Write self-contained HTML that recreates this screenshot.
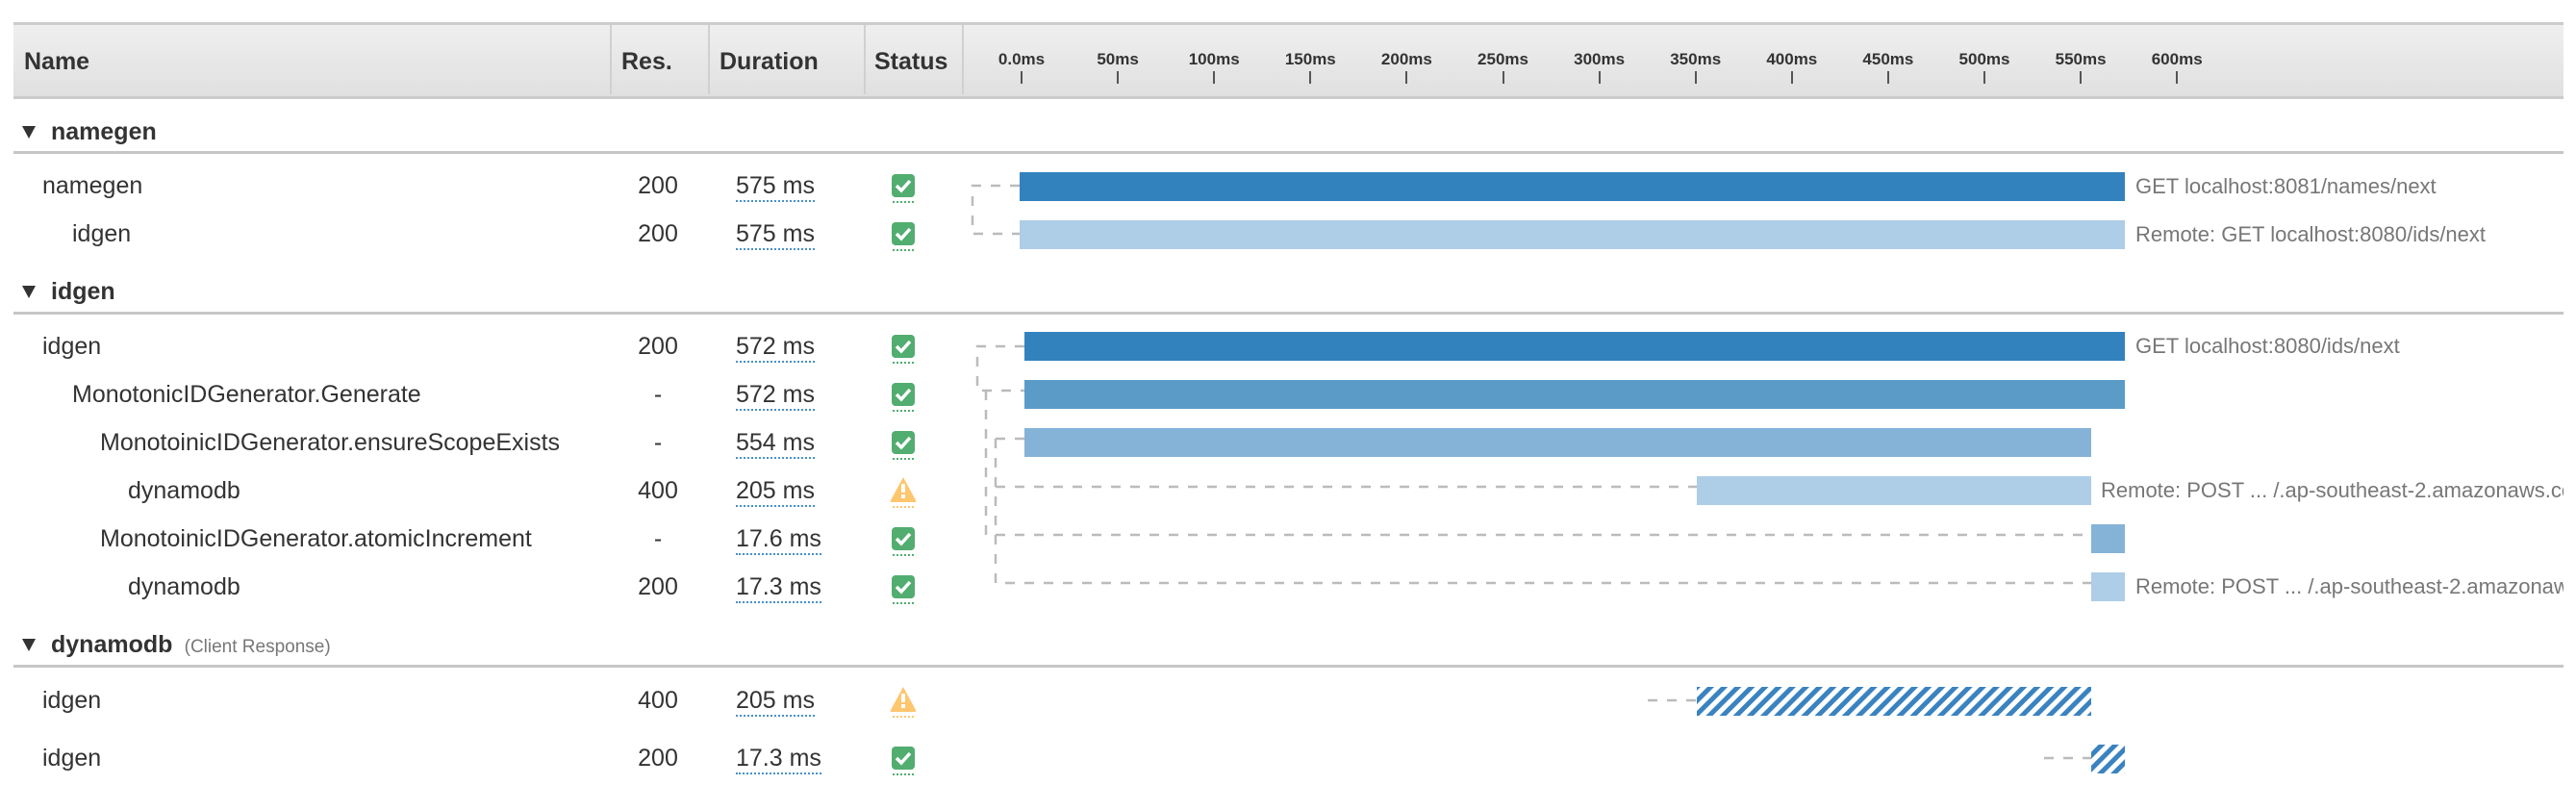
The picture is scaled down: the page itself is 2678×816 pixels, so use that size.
<!DOCTYPE html>
<html><head><meta charset="utf-8"><style>
*{margin:0;padding:0;box-sizing:border-box}
body{width:2678px;height:816px;background:#fff;font-family:"Liberation Sans",Arial,sans-serif;color:#333;position:relative;overflow:hidden}
.a{position:absolute;white-space:nowrap;line-height:30px;height:30px}
.hd{position:absolute;left:14px;top:23px;width:2651px;height:80px;background:linear-gradient(#efefef,#e0e0e0);border-top:3px solid #ccc;border-bottom:3px solid #ccc}
.hd .c{position:absolute;top:0;height:72px;border-left:2px solid #d0d0d0}
.ht{font-weight:bold;font-size:25px;color:#333;top:50px}
.tk{position:absolute;font-weight:bold;font-size:17px;color:#333;top:52px;width:80px;text-align:center;margin-left:-40px;line-height:20px}
.tm{position:absolute;top:74px;width:2px;height:13px;background:#555;margin-left:-1px}
.g{font-weight:bold;font-size:25px;color:#333}
.tri{position:absolute;width:0;height:0;border-left:7px solid transparent;border-right:7px solid transparent;border-top:13px solid #333}
.ln{position:absolute;left:14px;width:2651px;height:3px;background:#c6c6c6}
.n{font-size:25px;color:#333}
.r{font-size:25px;color:#333;width:60px;text-align:center}
.d{font-size:25px;color:#333;border-bottom:2px dotted #4a90c8;line-height:26px;height:30px}
.lb{font-size:22px;color:#777}
#clip{position:absolute;left:0;top:0;width:2665px;height:816px;overflow:hidden}
</style></head><body>
<div class="hd">
<div class="c" style="left:620px"></div><div class="c" style="left:722px"></div><div class="c" style="left:884px"></div><div class="c" style="left:986px"></div>
</div>
<div class="a ht" style="left:25px;top:49px">Name</div>
<div class="a ht" style="left:646px;top:49px">Res.</div>
<div class="a ht" style="left:748px;top:49px">Duration</div>
<div class="a ht" style="left:909px;top:49px">Status</div>
<div id="ticks"></div>

<div class="tri" style="left:23px;top:131px"></div><div class="a g" style="left:53px;top:122px">namegen</div>
<div class="ln" style="top:157px"></div>
<div class="tri" style="left:23px;top:297px"></div><div class="a g" style="left:53px;top:288px">idgen</div>
<div class="ln" style="top:324px"></div>
<div class="tri" style="left:23px;top:664px"></div><div class="a g" style="left:53px;top:655px">dynamodb <span style="font-weight:normal;font-size:19px;color:#777">&nbsp;(Client Response)</span></div>
<div class="ln" style="top:691px"></div>

<div id="rows"></div>

<svg style="position:absolute;left:0;top:0" width="2678" height="816">
<defs>
<pattern id="h" patternUnits="userSpaceOnUse" width="10" height="10" patternTransform="rotate(45)"><rect width="5" height="10" fill="#3a83c0"/></pattern>
</defs>
<g stroke="#bbb" stroke-width="2.5" stroke-dasharray="10 10" fill="none">
<path d="M1060 193 H1011 V243 H1060"/>
<path d="M1065 360 H1016 V406 H1065"/>
<path d="M1025 406 V556 H2174"/>
<path d="M1035 456 V606 H2174"/>
<path d="M1035 456 H1065"/>
<path d="M1035 506 H1764"/>
<path d="M1713 728 H1764"/>
<path d="M2125 788 H2174"/>
</g>
<rect x="1060" y="179" width="1149" height="30" fill="#3282be"/>
<rect x="1060" y="229" width="1149" height="30" fill="#aecde6"/>
<rect x="1065" y="345" width="1144" height="30" fill="#3282be"/>
<rect x="1065" y="395" width="1144" height="30" fill="#5b9bc8"/>
<rect x="1065" y="445" width="1109" height="30" fill="#85b3d8"/>
<rect x="1764" y="495" width="410" height="30" fill="#aecde6"/>
<rect x="2174" y="545" width="35" height="30" fill="#85b3d8"/>
<rect x="2174" y="595" width="35" height="30" fill="#aecde6"/>
<rect x="1764" y="714" width="410" height="30" fill="url(#h)"/>
<rect x="2174" y="774" width="35" height="30" fill="url(#h)"/>
</svg>
<div id="clip">
<div class="a lb" style="left:2220px;top:179px">GET localhost:8081/names/next</div>
<div class="a lb" style="left:2220px;top:229px">Remote: GET localhost:8080/ids/next</div>
<div class="a lb" style="left:2220px;top:345px">GET localhost:8080/ids/next</div>
<div class="a lb" style="left:2184px;top:495px">Remote: POST ... /.ap-southeast-2.amazonaws.com</div>
<div class="a lb" style="left:2220px;top:595px">Remote: POST ... /.ap-southeast-2.amazonaws.com</div>
</div>

<script>
var t='';for(var i=0;i<=12;i++){var x=1062+i*100.1;t+='<div class="tk" style="left:'+x+'px">'+(i==0?'0.0':i*50)+'ms</div><div class="tm" style="left:'+x+'px"></div>';}
document.getElementById('ticks').innerHTML=t;
var R=[[193,44,'namegen','200','575 ms',0],[243,75,'idgen','200','575 ms',0],
[360,44,'idgen','200','572 ms',0],[410,75,'MonotonicIDGenerator.Generate','-','572 ms',0],
[460,104,'MonotoinicIDGenerator.ensureScopeExists','-','554 ms',0],[510,133,'dynamodb','400','205 ms',1],
[560,104,'MonotoinicIDGenerator.atomicIncrement','-','17.6 ms',0],[610,133,'dynamodb','200','17.3 ms',0],
[728,44,'idgen','400','205 ms',1],[788,44,'idgen','200','17.3 ms',0]];
var h='';R.forEach(function(r){var y=r[0]-15;
h+='<div class="a n" style="left:'+r[1]+'px;top:'+y+'px">'+r[2]+'</div>';
h+='<div class="a r" style="left:654px;top:'+y+'px">'+r[3]+'</div>';
h+='<div class="a d" style="left:765px;top:'+(y+2)+'px">'+r[4]+'</div>';
if(r[5]){h+='<svg style="position:absolute;left:924px;top:'+(r[0]-15)+'px" width="30" height="34"><path d="M15 1 L28 25 Q29 27 27 27 H3 Q1 27 2 25 Z" fill="#fdc66f"/><rect x="13" y="8" width="4" height="9" fill="#fff"/><rect x="13" y="19" width="4" height="4" fill="#fff"/><line x1="4" y1="32" x2="28" y2="32" stroke="#fdc66f" stroke-width="2" stroke-dasharray="2 2"/></svg>';}
else{h+='<svg style="position:absolute;left:926px;top:'+(r[0]-12)+'px" width="26" height="32"><rect x="1" y="0" width="24" height="24" rx="4" fill="#52ad70"/><path d="M6 12 L11 17 L20 7" stroke="#fff" stroke-width="3.5" fill="none"/><line x1="2" y1="29" x2="25" y2="29" stroke="#52ad70" stroke-width="2" stroke-dasharray="2 2"/></svg>';}
});
document.getElementById('rows').innerHTML=h;
</script>
</body></html>
